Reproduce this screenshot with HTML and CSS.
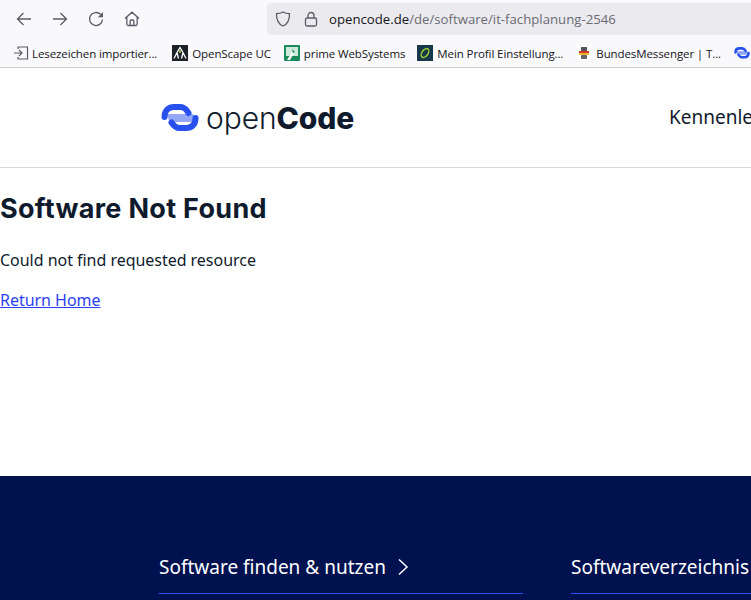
FILE: index.html
```html
<!DOCTYPE html>
<html lang="de">
<head>
<meta charset="utf-8">
<title>Software Not Found</title>
<link rel="stylesheet" href="styles.css">
</head>
<body>
<div class="chrome">
  <div class="toolbar">
    <div class="nav-buttons">
      <svg class="tb-icon" viewBox="0 0 16 16"><path d="M15 8H1.500M7.500 2L1.500 8l6 6"/></svg>
      <svg class="tb-icon" viewBox="0 0 16 16"><path d="M1 8h13.500M8.500 2l6 6-6 6"/></svg>
      <svg class="tb-icon" viewBox="0 0 16 16"><path d="M14.500 8.500A6.500 6.500 0 1 1 12.600 3.400"/><path class="solid" d="M15 1v5.200H9.800z"/></svg>
      <svg class="tb-icon" viewBox="0 0 16 16"><path d="M1 7.500L8 1.200l7 6.300M2.800 6.500V13a1.500 1.500 0 0 0 1.500 1.500h7.400a1.500 1.500 0 0 0 1.500-1.500V6.500M6.200 14.500V10a1 1 0 0 1 1-1h1.600a1 1 0 0 1 1 1v4.500"/></svg>
    </div>
    <div class="urlbar">
      <svg class="url-icon" viewBox="0 0 16 16"><path d="M8 1C5.800 2.200 3.600 2.600 1.500 2.700 1.400 9 3.600 13.200 8 15c4.400-1.800 6.600-6 6.500-12.300C12.400 2.600 10.200 2.200 8 1z"/></svg>
      <svg class="url-icon url-lock" viewBox="0 0 16 16"><rect x="2.500" y="7" width="11" height="8" rx="1.500"/><path d="M5 7V4.500a3 3 0 0 1 6 0V7"/></svg>
      <span class="url"><span class="url-host">opencode.de</span>/de/software/it-fachplanung-2546</span>
    </div>
  </div>
  <div class="bookmarks">
    <span class="bm bm-first"><svg class="bm-icon line" viewBox="0 0 16 16"><path d="M1 8h8M6 5l3 3-3 3M5 4V2h9.500v12H5v-2"/></svg>Lesezeichen importier...</span>
    <span class="bm"><svg class="bm-icon" viewBox="0 0 16 16"><rect width="16" height="16" fill="#1d2128"/><path d="M2 13.500l3-6 1.500 6M14 13.500l-3-6-1.500 6M5 7.500l3-5 3 5" fill="none" stroke="#fff" stroke-width="1.300"/><path d="M7 5h2v3H7z" fill="#8fb34a"/></svg>OpenScape UC</span>
    <span class="bm bm-tight"><svg class="bm-icon" viewBox="0 0 16 16"><rect width="16" height="16" rx="1" fill="#1b8a5a"/><rect x="2" y="2" width="12" height="9" fill="#cfeadc"/><path d="M3 15l5-8 2 1-4 7z" fill="#fff"/><path d="M8 4l3 3-2 1z" fill="#1b8a5a"/></svg>prime WebSystems</span>
    <span class="bm"><svg class="bm-icon" viewBox="0 0 16 16"><rect width="16" height="16" fill="#17384a"/><ellipse cx="8" cy="8" rx="3" ry="5" transform="rotate(35 8 8)" fill="none" stroke="#9ccb2c" stroke-width="1.500"/></svg>Mein Profil Einstellung...</span>
    <span class="bm"><svg class="bm-icon" viewBox="0 0 16 16"><rect width="16" height="16" fill="#fff"/><rect x="5" y="2" width="6" height="4" fill="#555"/><rect x="3" y="6" width="10" height="2" fill="#d8362a"/><rect x="3" y="8" width="10" height="2" fill="#e8b92e"/><rect x="5" y="10" width="6" height="4" rx="1" fill="#666"/></svg>BundesMessenger | T...</span>
    <span class="bm"><svg class="bm-icon" viewBox="3 4 38 28"><use href="#logo-mark"/></svg></span>
  </div>
</div>
<header class="site-header">
  <a class="logo">
    <svg class="logo-mark" viewBox="0 0 44 36">
      <g id="logo-mark">
        <path d="M6.500 17C6.500 10.500 10.500 7 16 7H22.500C26.500 7 28.500 9.500 30.500 13" fill="none" stroke="#2850ee" stroke-width="6" stroke-linecap="round"/>
        <path d="M37.500 18C37.500 25 33.500 28 28 28H21.500C17.500 28 15.500 25.500 13.500 22.500" fill="none" stroke="#2850ee" stroke-width="6" stroke-linecap="round"/>
        <path d="M8 14H35L39 22H12z" fill="#2850ee" fill-opacity=".5"/>
      </g>
    </svg>
    <span class="logo-text">open<b>Code</b></span>
  </a>
  <nav class="site-nav">Kennenlernen</nav>
</header>
<main class="content">
  <h1 class="title">Software Not Found</h1>
  <p class="message">Could not find requested resource</p>
  <a class="home-link" href="#">Return Home</a>
</main>
<footer class="site-footer">
  <div class="footer-col">
    <div class="footer-head">Software finden &amp; nutzen<svg class="chev" viewBox="0 0 12 18"><path d="M2 1.500L10 9l-8 7.500"/></svg></div>
  </div>
  <div class="footer-col">
    <div class="footer-head">Softwareverzeichnis</div>
  </div>
</footer>
</body>
</html>
```
FILE: styles.css
```css
* { box-sizing: border-box; }
html, body { margin: 0; height: 600px; overflow: hidden; background: #fff; }
body { font-family: "Noto Sans", sans-serif; color: #0f1b2d; width: 751px; }

.chrome { height: 68px; background: #f9f9fb; border-bottom: 1px solid #cfcfd4; font-family: "Open Sans", sans-serif; color: #15141a; }
.toolbar { height: 38px; display: flex; align-items: center; }
.nav-buttons { display: flex; align-items: center; gap: 20px; padding-left: 16px; width: 267px; }
.tb-icon { width: 16px; height: 16px; fill: none; stroke: #5b5b66; stroke-width: 1.300; }
.tb-icon .solid { fill: #5b5b66; stroke: none; }
.urlbar { flex: 1; height: 32px; background: #ebebef; border-radius: 4px 0 0 4px; display: flex; align-items: center; padding-left: 8px; gap: 10px; }
.url-icon { width: 16px; height: 16px; fill: none; stroke: #5b5b66; stroke-width: 1.300; }
.url-lock { margin-left: 2px; }
.url { font-size: 13.200px; color: #6a6a73; white-space: nowrap; }
.url-host { color: #15141a; }
.bookmarks { height: 29px; padding-top: 1px; display: flex; align-items: center; padding-left: 13px; gap: 13px; white-space: nowrap; overflow: hidden; font-size: 11.500px; letter-spacing: -.1px; }
.bm { display: flex; align-items: center; gap: 4px; }
.bm-first { gap: 3px; margin-right: 2px; }
.bm-tight { margin-right: -1px; }
.bm-icon { width: 16px; height: 16px; flex: none; }
.bm-icon.line { fill: none; stroke: #5b5b66; stroke-width: 1.200; }

.site-header { height: 100px; border-bottom: 1px solid #d9d9d9; display: flex; align-items: center; padding-left: 158px; white-space: nowrap; overflow: hidden; }
.logo { display: flex; align-items: center; gap: 4px; width: 511px; flex: none; }
.logo-mark { width: 44px; height: 36px; }
.logo-text { font-family: "Inter", sans-serif; font-size: 30px; font-weight: 300; color: #0f1b2d; letter-spacing: -.1px; }
.logo-text b { font-weight: 800; }
.site-nav { font-size: 19px; line-height: 24px; padding-bottom: 2px; color: #0f1b2d; }

.content { height: 308px; padding-top: 23px; }
.title { margin: 0; font-family: "Inter", sans-serif; font-size: 27px; line-height: 36px; font-weight: 700; color: #0f1b2d; letter-spacing: .3px; }
.message { margin: 21px 0 0; font-size: 16px; line-height: 24px; letter-spacing: -.03px; color: #0f1b2d; }
.home-link { display: block; margin-top: 16px; font-size: 16px; line-height: 24px; letter-spacing: -.03px; color: #2b3ff2; text-decoration: underline; }

.site-footer { height: 124px; background: #001150; display: grid; grid-template-columns: 364px 364px; column-gap: 48px; padding-left: 159px; padding-top: 74px; align-items: start; color: #fff; }
.footer-head { height: 44px; font-size: 19px; line-height: 34px; border-bottom: 1px solid #2b52f0; display: flex; align-items: flex-start; gap: 11px; white-space: nowrap; }
.chev { width: 12px; height: 18px; margin-top: 8px; fill: none; stroke: #fff; stroke-width: 1.500; }
```
